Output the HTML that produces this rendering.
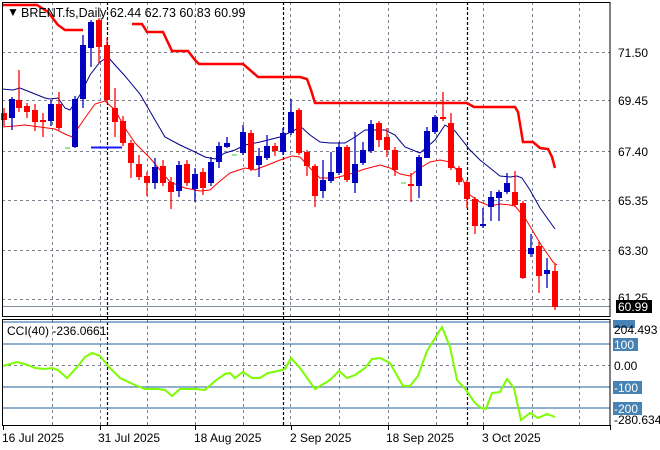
<!DOCTYPE html>
<html><head><meta charset="utf-8"><style>
html,body{margin:0;padding:0;background:#fff;}
svg{display:block;font-family:"Liberation Sans",sans-serif;font-size:12px;}
</style></head><body>
<svg id="s" width="660" height="450" xmlns="http://www.w3.org/2000/svg">
<rect width="660" height="450" fill="#fff"/>
<g id="grid" stroke="#7a8290" stroke-width="1" stroke-dasharray="3,3" fill="none">
<path d="M2 52.5H610M2 100.5H610M2 151.5H610M2 200.5H610M2 250.5H610M2 299.5H610M2 365.5H610"/>
</g>
<g id="vg" stroke="#7a8290" stroke-dasharray="3,3"></g>
<g stroke="#000" stroke-dasharray="3,2" stroke-width="1.2">
<path d="M107.5 2V425M283.5 2V425M467.5 2V425"/>
</g>
<line x1="2" y1="306.5" x2="610" y2="306.5" stroke="#8090a0"/>
<g stroke="#4a80b0" stroke-width="1.3">
<path d="M2 322H610M2 344H610M2 387H610M2 408H610"/>
</g>
<!-- red step line -->
<polyline fill="none" stroke="#f00" stroke-width="2.5" points="2,5 37,5 48,12 58,25 65,30 83,30"/>
<polyline fill="none" stroke="#f00" stroke-width="2.5" points="132,24 142,24 147,32 163,32 172,51 188,51 195,60 199,64 243,64 250,70 258,77 300,77 307,79 311,90 315,103 467,103 474,107 515,107 518,112 523,142 533,142 540,148 548,149 552,157 555,168"/>
<!-- blue MA -->
<polyline fill="none" stroke="#00008b" stroke-width="1" points="2,89 13,90 20,88 30,92 45,98 50,99 58,98 65,108 70,110 80,95 90,75 100,62 108,57 115,65 125,76 140,94 155,120 165,137 180,145 195,152 205,157 215,159 225,153 235,150 245,145 260,142 280,137 295,130 300,126 310,135 320,142 330,143 345,143 355,137 365,130 385,130 395,135 405,147 420,153 435,140 445,125 455,131 470,150 480,160 490,168 500,176 510,177 517,176 522,178 530,190 540,208 550,222 555,229"/>
<polyline fill="none" stroke="#f00" stroke-width="1" points="2,127 15,126 25,125 40,127 55,129 65,134 72,137 85,118 95,104 105,101 115,110 125,128 135,143 150,158 160,170 170,182 185,188 200,191 210,190 220,181 230,173 245,168 255,170 270,164 280,160 292,156 300,157 310,168 320,178 335,178 350,174 365,169 380,165 390,168 400,174 410,176 420,168 430,162 440,160 450,162 460,174 470,195 480,202 490,206 500,204 510,205 515,206 525,218 540,243 553,262 557,265"/>
<g id="c"></g>
<line x1="65" y1="148" x2="70" y2="148" stroke="#32cd32"/>
<line x1="232" y1="155" x2="237" y2="155" stroke="#32cd32"/>
<line x1="401" y1="183" x2="406" y2="183" stroke="#32cd32"/>
<line x1="91" y1="147.5" x2="122" y2="147.5" stroke="#1a1aff" stroke-width="2"/>
<!-- CCI -->
<polyline fill="none" stroke="#7cfc00" stroke-width="2" points="3,366 17,362 25,364 35,368 45,369 52,368 58,370 67,378 78,366 85,357 92,353 100,356 110,368 120,378 135,385 145,389 158,389 165,390 172,396 180,389 195,389 205,390 215,381 225,374 230,373 235,378 243,372 252,378 260,378 268,373 278,371 285,369 291,358 300,368 315,389 330,380 339,371 347,378 355,375 365,368 372,359 380,358 390,363 403,386 410,386 418,376 427,351 442,327 450,347 457,380 466,390 475,403 481,408 486,409 492,393 500,392 507,379 514,388 521,420 530,413 538,418 547,414 555,417"/>
<!-- frames -->
<rect x="2.5" y="2.5" width="607.5" height="314" fill="none" stroke="#000"/>
<rect x="2.5" y="319.5" width="607.5" height="106" fill="none" stroke="#000"/>
<text x="7" y="16" font-size="12">▼</text>
<text x="21" y="17" fill="#000" font-size="12.5">BRENT.fs,Daily  62.44 62.73 60.83 60.99</text>
<text x="7" y="335" font-size="12">CCI(40) -236.0661</text>
<!-- right axis -->
<g font-size="12" fill="#000">
<text x="618" y="57">71.50</text><text x="618" y="105">69.45</text><text x="618" y="156">67.40</text><text x="618" y="205">65.35</text><text x="618" y="255">63.30</text><text x="618" y="302">61.25</text>
</g>
<rect x="616" y="300" width="36" height="13" fill="#000"/>
<text x="618" y="311" fill="#fff" font-size="12">60.99</text>
<g fill="#4682b4"><rect x="613" y="320" width="22" height="8"/><rect x="613" y="338" width="25" height="13"/><rect x="613" y="381" width="29" height="13"/><rect x="613" y="402" width="29" height="13"/></g>
<g font-size="12"><text x="614" y="334">204.493</text><text x="614" y="349" fill="#fff">100</text><text x="614" y="370">0.00</text><text x="614" y="392" fill="#fff">-100</text><text x="614" y="413" fill="#fff">-200</text><text x="614" y="424">-280.634</text></g>
<g font-size="12"><text x="2" y="442">16 Jul 2025</text><text x="98" y="442">31 Jul 2025</text><text x="194" y="442">18 Aug 2025</text><text x="290" y="442">2 Sep 2025</text><text x="386" y="442">18 Sep 2025</text><text x="482" y="442">3 Oct 2025</text></g>
<g stroke="#000"><path d="M3.5 425V430M100.5 425V430M195.5 425V430M291.5 425V430M388.5 425V430M483.5 425V430M610.5 425V430"/></g>
</svg>
<script>
var ns="http://www.w3.org/2000/svg";
var vg=document.getElementById('vg');
[52,100,147,195,243,290,339,388,436,483,532,579].forEach(function(x){var l=document.createElementNS(ns,'path');l.setAttribute('d','M'+(x+.5)+' 2V425');vg.appendChild(l);});
var d=[[4,113,120,108,126,'r'],[12,99,118,97,130,'b'],[19,100,108,70,112,'r'],[27,106,112,103,118,'r'],[35,110,122,104,131,'r'],[43,120,122,113,137,'r'],[51,104,121,100,126,'b'],[59,104,128,92,130,'r'],[75,99,147,96,148,'b'],[83,45,99,35,108,'b'],[91,22,48,20,67,'b'],[99,20,47,18,63,'r'],[107,45,100,38,102,'r'],[115,108,122,88,137,'r'],[123,121,143,116,146,'r'],[131,143,163,140,178,'r'],[139,164,177,155,180,'r'],[147,176,183,172,196,'r'],[155,167,183,158,189,'b'],[163,166,183,160,186,'r'],[171,182,192,177,209,'r'],[179,165,191,161,197,'b'],[187,164,183,160,186,'r'],[195,174,189,168,202,'b'],[203,172,188,168,195,'r'],[211,162,183,157,186,'b'],[219,146,162,142,168,'b'],[227,143,147,137,148,'b'],[243,132,153,125,155,'b'],[251,133,169,130,171,'r'],[259,156,165,148,177,'b'],[267,146,158,135,160,'b'],[275,146,151,143,156,'r'],[283,133,152,128,155,'b'],[291,112,133,99,135,'b'],[299,110,153,108,155,'r'],[307,152,166,150,176,'r'],[315,166,196,164,207,'r'],[323,180,191,160,198,'b'],[331,172,181,152,183,'b'],[339,147,173,142,175,'b'],[347,147,180,145,182,'r'],[355,164,183,132,193,'b'],[363,150,163,142,165,'b'],[371,124,151,120,153,'b'],[379,123,140,121,147,'r'],[387,137,150,128,157,'r'],[395,150,170,147,176,'r'],[411,184,186,173,202,'r'],[419,157,186,155,198,'b'],[427,131,158,127,147,'b'],[435,117,132,115,134,'b'],[443,117,119,92,121,'r'],[451,123,168,113,170,'r'],[459,168,182,166,185,'r'],[467,182,199,180,208,'r'],[475,199,226,197,234,'r'],[483,224,226,208,228,'b'],[491,197,207,191,221,'b'],[499,192,198,190,221,'b'],[507,183,192,173,194,'b'],[515,192,205,171,207,'r'],[523,203,278,201,279,'r'],[531,248,254,234,257,'b'],[539,246,276,242,293,'r'],[547,270,274,258,288,'b'],[555,271,307,264,310,'r']];
var g=document.getElementById('c');
d.forEach(function(c){var col=c[5]=='r'?'#f00':'#0000c0';
var w=document.createElementNS(ns,'line');w.setAttribute('x1',c[0]);w.setAttribute('x2',c[0]);w.setAttribute('y1',c[3]);w.setAttribute('y2',c[4]);w.setAttribute('stroke',col);w.setAttribute('stroke-width','1.3');g.appendChild(w);
var r=document.createElementNS(ns,'rect');r.setAttribute('x',c[0]-3);r.setAttribute('y',c[1]);r.setAttribute('width',6);r.setAttribute('height',Math.max(2,c[2]-c[1]));r.setAttribute('fill',col);g.appendChild(r);});
</script>
</body></html>
